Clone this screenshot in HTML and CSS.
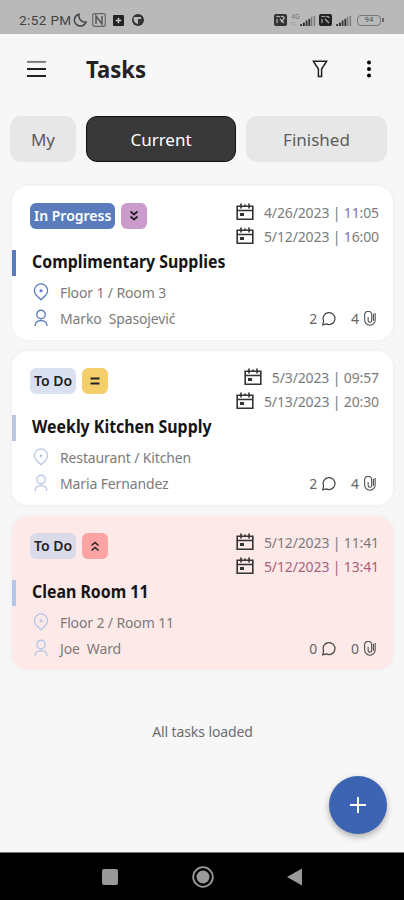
FILE: index.html
```
<!DOCTYPE html>
<html lang="en">
<head>
<meta charset="utf-8">
<title>Tasks</title>
<link rel="stylesheet" href="styles.css">
</head>
<body>
<svg class="defs" aria-hidden="true">
  <symbol id="cal" viewBox="0 0 18 18"><path d="M1.2 3.3H16.8V16.3H1.2ZM1.2 7.5H16.8M5 .6V5.500M13 .6V5.500M9 1.500V4" fill="none" stroke="currentColor" stroke-width="1.6"/><path d="M4 10H8V13H4Z" fill="currentColor"/></symbol>
  <symbol id="pin" viewBox="0 0 16 18"><path d="M8 16.8 3.3 12.2A6.6 6.6 0 1 1 12.7 12.2Z" fill="none" stroke="currentColor" stroke-width="1.3"/><circle cx="8" cy="7.7" r="1.5" fill="currentColor"/></symbol>
  <symbol id="person" viewBox="0 0 16 18"><circle cx="8" cy="5.5" r="4.2" fill="none" stroke="currentColor" stroke-width="1.4"/><path d="M2 17C2 9.600 14 9.600 14 17" fill="none" stroke="currentColor" stroke-width="1.4"/></symbol>
  <symbol id="chat" viewBox="0 0 16 16"><path d="M1.300 14.700 2.200 10.800A6.400 6.400 0 1 1 5 13.700Z" fill="none" stroke="currentColor" stroke-width="1.3"/></symbol>
  <symbol id="clip" viewBox="0 0 14 16"><path d="M8.800 5V3.500A3 3 0 0 0 1.300 4.500V9.500a5.600 5.600 0 0 0 11.200 0V2M8.800 4.500V10a1.900 1.900 0 0 1-3.800 0V6.500M10.600 3V10.500" fill="none" stroke="currentColor" stroke-width="1.1"/></symbol>
  <symbol id="down" viewBox="0 0 10 12"><path d="M1.500 1.500 5 4.500 8.500 1.500M1.500 6.500 5 9.500 8.500 6.500" fill="none" stroke="currentColor" stroke-width="1.8"/></symbol>
  <symbol id="up" viewBox="0 0 10 12"><path d="M1.500 5.500 5 2.500 8.500 5.500M1.500 10.500 5 7.500 8.500 10.500" fill="none" stroke="currentColor" stroke-width="1.5"/></symbol>
  <symbol id="equal" viewBox="0 0 10 12"><path d="M.5 3.500H9.500M.5 8.500H9.500" fill="none" stroke="currentColor" stroke-width="2"/></symbol>
  <symbol id="signal" viewBox="0 0 17 12"><path d="M1.500 12V10M4.500 12V8.500" stroke="#222" stroke-width="2"/><path d="M7.500 12V6M10.500 12V4" stroke="#333" stroke-width="2"/><path d="M13 12V2M16 12V1" stroke="#777" stroke-width="1.500"/></symbol>
</svg>

<header class="status">
  <span class="clock">2:52 PM</span>
  <svg class="moon" viewBox="0 0 14 14"><path d="M6 1.200A6 6 0 1 0 13 9.200 6.500 6.500 0 0 1 6 1.200Z" fill="none" stroke="#444" stroke-width="1.500"/></svg>
  <svg class="nfc" viewBox="0 0 14 14"><rect x=".7" y=".7" width="12.600" height="12.600" rx="2" fill="none" stroke="#666" stroke-width="1.200"/><path d="M4 11V3L10 11V3" fill="none" stroke="#555" stroke-width="1.500"/></svg>
  <svg class="plusbox" viewBox="0 0 12 12"><rect width="12" height="12" rx="1" fill="#222"/><path d="M6 3V9M3 6H9" stroke="#ccc" stroke-width="1.500"/></svg>
  <svg class="round" viewBox="0 0 14 14"><circle cx="7" cy="7" r="6" fill="#333"/><path d="M3 4H10V6H7V11A5 5 0 0 1 3 4Z" fill="#bbb"/></svg>
  <svg class="radio" viewBox="0 0 13 12"><rect width="13" height="12" rx="2" fill="#333"/><path d="M2.500 3Q4 1.500 6 3M7 3Q9 1.500 10.500 4L7 8M3 5V9M6 5l4 4" fill="none" stroke="#bbb" stroke-width="1.200"/></svg>
  <span class="net">4G<small>↑↓</small></span>
  <svg class="bars"><use href="#signal"/></svg>
  <svg class="radio second" viewBox="0 0 13 12"><rect width="13" height="12" rx="2" fill="#222"/><path d="M2.500 3Q4 1.500 6 3M7 3Q9 1.500 10.500 4M3 5V9M6 5l4 4" fill="none" stroke="#aaa" stroke-width="1.200"/></svg>
  <svg class="bars"><use href="#signal"/></svg>
  <span class="battery">94</span>
</header>

<nav class="appbar">
  <svg class="menu" viewBox="0 0 20 18"><path d="M0 1.500H20" stroke="#777" stroke-width="2"/><path d="M0 9H20M0 16.300H20" stroke="#222" stroke-width="2"/></svg>
  <h1>Tasks</h1>
  <svg class="filter" viewBox="0 0 16 18"><path d="M1.300 1.200H14.700L9.600 9V16.500H6.400V9Z" fill="none" stroke="#222" stroke-width="1.500"/></svg>
  <svg class="more" viewBox="0 0 6 18"><circle cx="3" cy="2.500" r="2"/><circle cx="3" cy="9" r="2"/><circle cx="3" cy="15.500" r="2"/></svg>
</nav>

<div class="tabs">
  <button class="tab my">My</button>
  <button class="tab current">Current</button>
  <button class="tab finished">Finished</button>
</div>

<main class="list">
  <article class="card progress">
    <div class="head">
      <span class="tag">In Progress</span><span class="prio low"><svg><use href="#down"/></svg></span>
      <div class="dates"><div><svg><use href="#cal"/></svg><time>4/26/2023 | 11:05</time></div><div><svg><use href="#cal"/></svg><time>5/12/2023 | 16:00</time></div></div>
    </div>
    <h2><span>Complimentary Supplies</span></h2>
    <div class="row"><svg><use href="#pin"/></svg><span>Floor 1 / Room 3</span></div>
    <div class="row"><svg><use href="#person"/></svg><span>Marko&nbsp; Spasojević</span><span class="counts"><b>2</b><svg class="chat"><use href="#chat"/></svg><b>4</b><svg class="clip"><use href="#clip"/></svg></span></div>
  </article>

  <article class="card">
    <div class="head">
      <span class="tag">To Do</span><span class="prio mid"><svg><use href="#equal"/></svg></span>
      <div class="dates"><div><svg><use href="#cal"/></svg><time>5/3/2023 | 09:57</time></div><div><svg><use href="#cal"/></svg><time>5/13/2023 | 20:30</time></div></div>
    </div>
    <h2><span>Weekly Kitchen Supply</span></h2>
    <div class="row"><svg><use href="#pin"/></svg><span>Restaurant / Kitchen</span></div>
    <div class="row"><svg><use href="#person"/></svg><span>Maria Fernandez</span><span class="counts"><b>2</b><svg class="chat"><use href="#chat"/></svg><b>4</b><svg class="clip"><use href="#clip"/></svg></span></div>
  </article>

  <article class="card late">
    <div class="head">
      <span class="tag">To Do</span><span class="prio high"><svg><use href="#up"/></svg></span>
      <div class="dates"><div><svg><use href="#cal"/></svg><time>5/12/2023 | 11:41</time></div><div><svg><use href="#cal"/></svg><time class="overdue">5/12/2023 | 13:41</time></div></div>
    </div>
    <h2><span>Clean Room 11</span></h2>
    <div class="row"><svg><use href="#pin"/></svg><span>Floor 2 / Room 11</span></div>
    <div class="row"><svg><use href="#person"/></svg><span>Joe&nbsp; Ward</span><span class="counts"><b>0</b><svg class="chat"><use href="#chat"/></svg><b>0</b><svg class="clip"><use href="#clip"/></svg></span></div>
  </article>
  <p class="end">All tasks loaded</p>
</main>

<button class="fab" aria-label="Add task"><svg viewBox="0 0 16 16"><path d="M8 0V16M0 8H16" stroke="#fff" stroke-width="2"/></svg></button>

<footer class="sysnav">
  <svg viewBox="0 0 22 22"><rect x="3" y="3" width="16" height="16" rx="2" fill="#999"/></svg>
  <svg viewBox="0 0 22 22"><circle cx="11" cy="11" r="9.800" fill="none" stroke="#999" stroke-width="1.800"/><circle cx="11" cy="11" r="6.500" fill="#999"/></svg>
  <svg viewBox="0 0 22 22"><path d="M18 2.500V19.500L3 11Z" fill="#999"/></svg>
</footer>
</body>
</html>
```
FILE: styles.css
```
* { box-sizing: border-box; }
body {
  margin: 0;
  height: 900px;
  overflow: hidden;
  position: relative;
  display: flex;
  flex-direction: column;
  background: #f7f7f7;
  font-family: "Noto Sans", "Open Sans", sans-serif;
  color: #222;
}
svg { display: block; flex: none; }
.defs { position: absolute; width: 0; height: 0; }
button { border: 0; padding: 0; font: inherit; }

.status {
  height: 34px;
  padding: 6px 18px 0 19px;
  display: flex;
  align-items: center;
  background: #b9b9b9;
}
.clock { width: 54px; font: 13.500px Roboto, sans-serif; color: #444; letter-spacing: .4px; white-space: nowrap; }
.moon { width: 14px; height: 14px; }
.nfc { width: 14px; height: 14px; margin-left: 5px; }
.plusbox { width: 11px; height: 11px; margin-left: 7px; }
.round { width: 14px; height: 14px; margin-left: 7px; }
.radio { width: 13px; height: 12px; margin-left: auto; }
.net { width: 10px; margin: 0 -2px 0 4px; font: 7px/6px Roboto, sans-serif; color: #777; }
.net small { display: block; font-size: 5px; }
.bars { width: 17px; height: 11px; }
.second { margin-left: 3px; }
.second + .bars { margin-left: 3px; }
.battery {
  position: relative;
  width: 24px;
  height: 11px;
  margin: 0 5px 0 5px;
  border: 1.500px solid #777;
  border-radius: 4px;
  font: 8px/8px Roboto, sans-serif;
  text-align: center;
  color: #555;
}
.battery::after { content: ""; position: absolute; right: -4px; top: 2px; width: 2px; height: 4px; background: #666; }

.appbar { height: 70px; padding: 0 32px 0 27px; display: flex; align-items: center; }
.menu { width: 19px; height: 18px; }
h1 {
  margin: 0 auto 0 40px;
  font-size: 24px;
  line-height: 32px;
  font-weight: 700;
  transform: scaleX(.92);
  transform-origin: left;
}
.filter { width: 16px; height: 18px; }
.more { width: 6px; height: 18px; margin-left: 38px; }

.tabs { display: flex; gap: 10px; padding: 12px 17px 0 10px; }
.tab { height: 46px; border-radius: 11px; background: #e7e7e7; font-size: 17px; color: #5c5c5c; }
.my { width: 66px; }
.current { width: 150px; background: #383838; color: #fff; border: 1px solid #111; }
.finished { width: 141px; }

.list { flex: 1; padding: 24px 11px 0 12px; display: flex; flex-direction: column; gap: 11px; }
.card {
  height: 154px;
  padding: 15px 14px 0 18px;
  border-radius: 16px;
  background: #fff;
  box-shadow: 0 0 5px rgba(0, 0, 0, .05);
  --accent: #b9c7e5;
}
.progress { --accent: #5b7cbc; }
.late { background: #fee9e9; --accent: #b4c7e8; }
.head { height: 49px; display: flex; }
.tag, .prio { height: 26px; margin-top: 2px; border-radius: 6px; }
.tag { padding: 0 4px; font-size: 14px; line-height: 25px; font-weight: 600; background: #d9e1f0; white-space: nowrap; }
.progress .tag { background: #5b7cbc; color: #fff; }
.late .tag { background: #dbdae8; }
.prio { width: 26px; margin-left: 6px; display: grid; place-items: center; }
.prio svg { width: 10px; height: 12px; }
.low { background: #cb9ccb; }
.mid { background: #f5ce6c; }
.high { background: #fea3a3; }
.dates { margin: -1px 0 0 auto; }
.dates div { height: 24px; display: flex; align-items: center; justify-content: flex-end; gap: 10px; }
.dates svg { width: 18px; height: 18px; color: #333; }
.dates time, .row { font-size: 14px; letter-spacing: -.13px; color: #7b7b7b; }
.dates .overdue { color: #a8627a; }
h2 {
  margin: 0 0 3px -18px;
  height: 26px;
  padding-left: 16px;
  border-left: 4px solid var(--accent);
  font-size: 17px;
  line-height: 24px;
  font-weight: 700;
  color: #151515;
  white-space: nowrap;
}
h2 span { display: inline-block; transform: scaleX(.935); transform-origin: left; }
.row { height: 26px; padding-left: 3px; display: flex; align-items: center; }
.row > svg { width: 16px; height: 18px; margin-right: 11px; color: var(--accent); }
.counts { margin-left: auto; display: flex; align-items: center; color: #666; }
.counts b { font-weight: 400; }
.chat { width: 16px; height: 15px; margin: 0 14px 0 4px; color: #444; }
.clip { width: 14px; height: 15px; margin: 0 2px 0 4px; color: #444; }
.end { margin: 41px 0 0; font-size: 14px; line-height: 20px; letter-spacing: -.1px; text-align: center; color: #6c6c6c; }

.fab {
  position: absolute;
  left: 329px;
  top: 776px;
  width: 58px;
  height: 58px;
  border-radius: 50%;
  display: grid;
  place-items: center;
  background: #3d63b3;
  box-shadow: 0 3px 6px rgba(0, 0, 0, .3);
}
.fab svg { width: 16px; height: 16px; }
.sysnav {
  height: 48px;
  padding: 0 98px 0 99px;
  display: flex;
  align-items: center;
  justify-content: space-between;
  background: #000;
  border-top: 1px solid #777;
}
.sysnav svg { width: 22px; height: 22px; }
```
